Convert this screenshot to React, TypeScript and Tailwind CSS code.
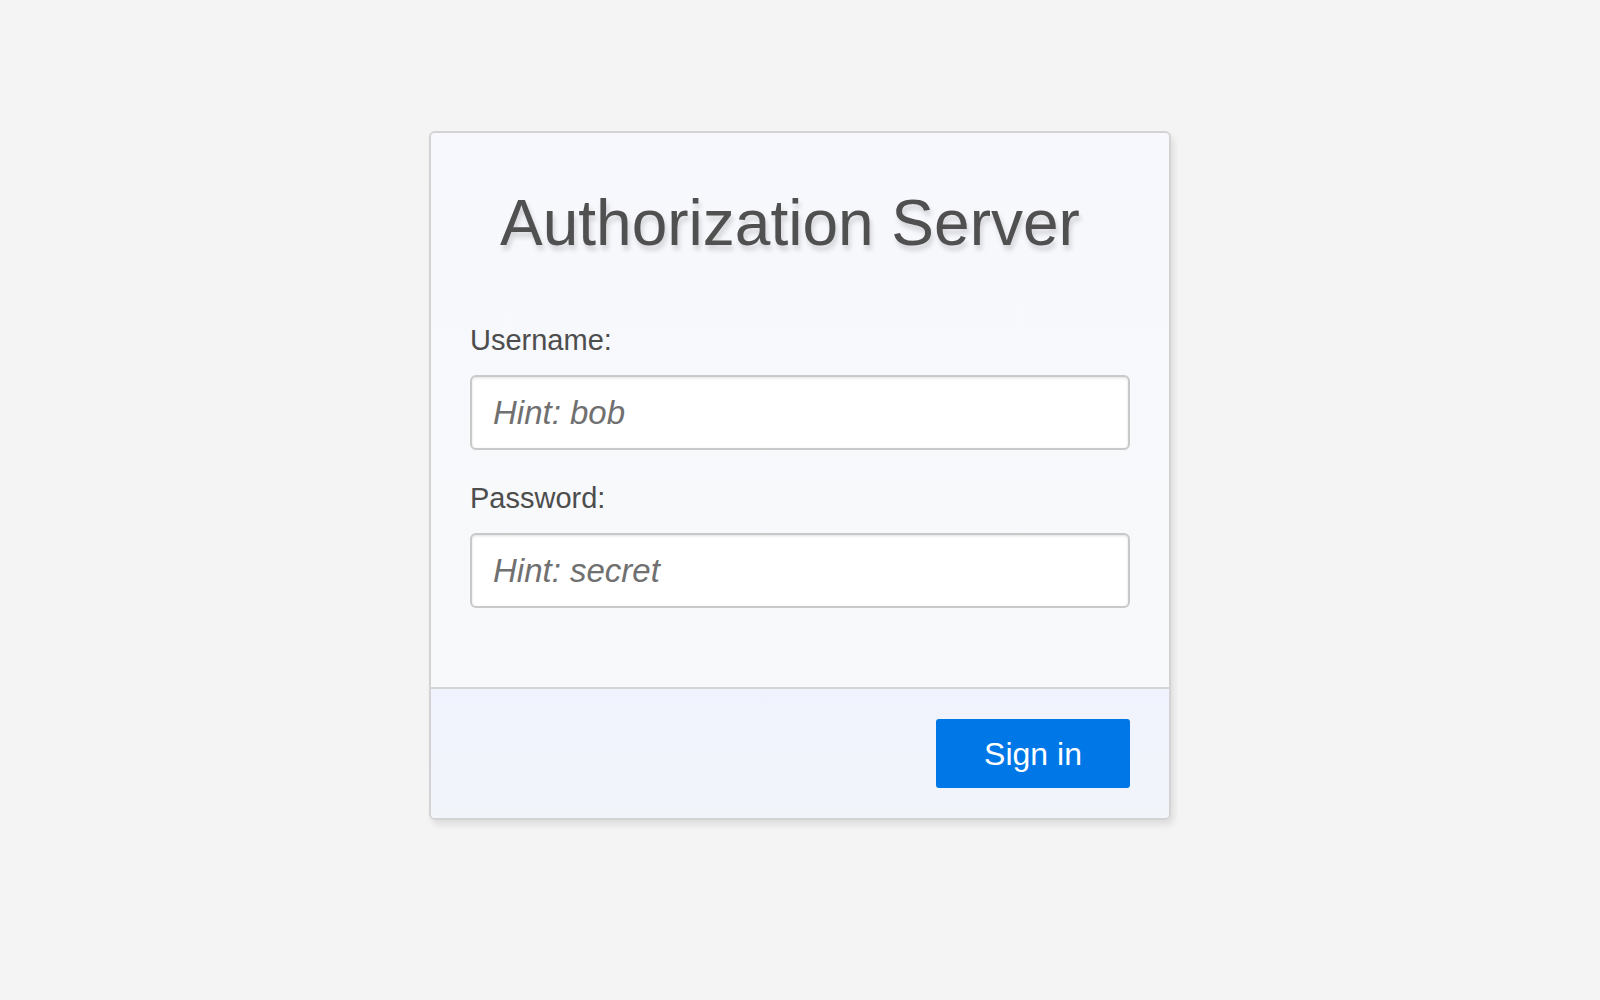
export default function App() {
  return (
    <div
      className="min-h-screen w-full bg-[#f4f4f4] pt-[131px]"
      style={{ fontFamily: '"Liberation Sans", Arial, sans-serif' }}
    >
      <div className="mx-auto w-[742px] overflow-hidden rounded-[6px] border-2 border-[#d3d3d3] shadow-[3px_5px_6px_rgba(0,0,0,0.09)]">
        <div className="bg-gradient-to-b from-[#f7f8fd] to-[#f8f9fa] px-[39px] pt-[53px] pb-[79px]">
          <h1 className="pl-[30px] text-[64px] leading-[74px] text-[#505050] [text-shadow:2px_5px_5px_rgba(0,0,0,0.15)]">
            Authorization Server
          </h1>

          <label className="mt-[64px] block text-[29px] leading-[32px] text-[#4d4d4d]">Username:</label>
          <input
            type="text"
            placeholder="Hint: bob"
            className="mt-[19px] block h-[75px] w-full rounded-[6px] border-2 border-[#c9c9c9] bg-white px-[21px] text-[33px] text-[#333] shadow-[inset_0_1px_3px_rgba(0,0,0,0.12)] outline-none placeholder:italic placeholder:text-[#707070]"
          />

          <label className="mt-[32px] block text-[29px] leading-[32px] text-[#4d4d4d]">Password:</label>
          <input
            type="password"
            placeholder="Hint: secret"
            className="mt-[19px] block h-[75px] w-full rounded-[6px] border-2 border-[#c9c9c9] bg-white px-[21px] text-[33px] text-[#333] shadow-[inset_0_1px_3px_rgba(0,0,0,0.12)] outline-none placeholder:italic placeholder:text-[#707070]"
          />
        </div>

        <div className="flex justify-end border-t-2 border-[#d5d5d5] bg-gradient-to-b from-[#f0f3fd] to-[#f1f4f9] px-[39px] pt-[30px] pb-[30px]">
          <button className="h-[69px] w-[194px] rounded-[3px] bg-[#0077e6] text-[32px] text-white">
            Sign in
          </button>
        </div>
      </div>
    </div>
  );
}
